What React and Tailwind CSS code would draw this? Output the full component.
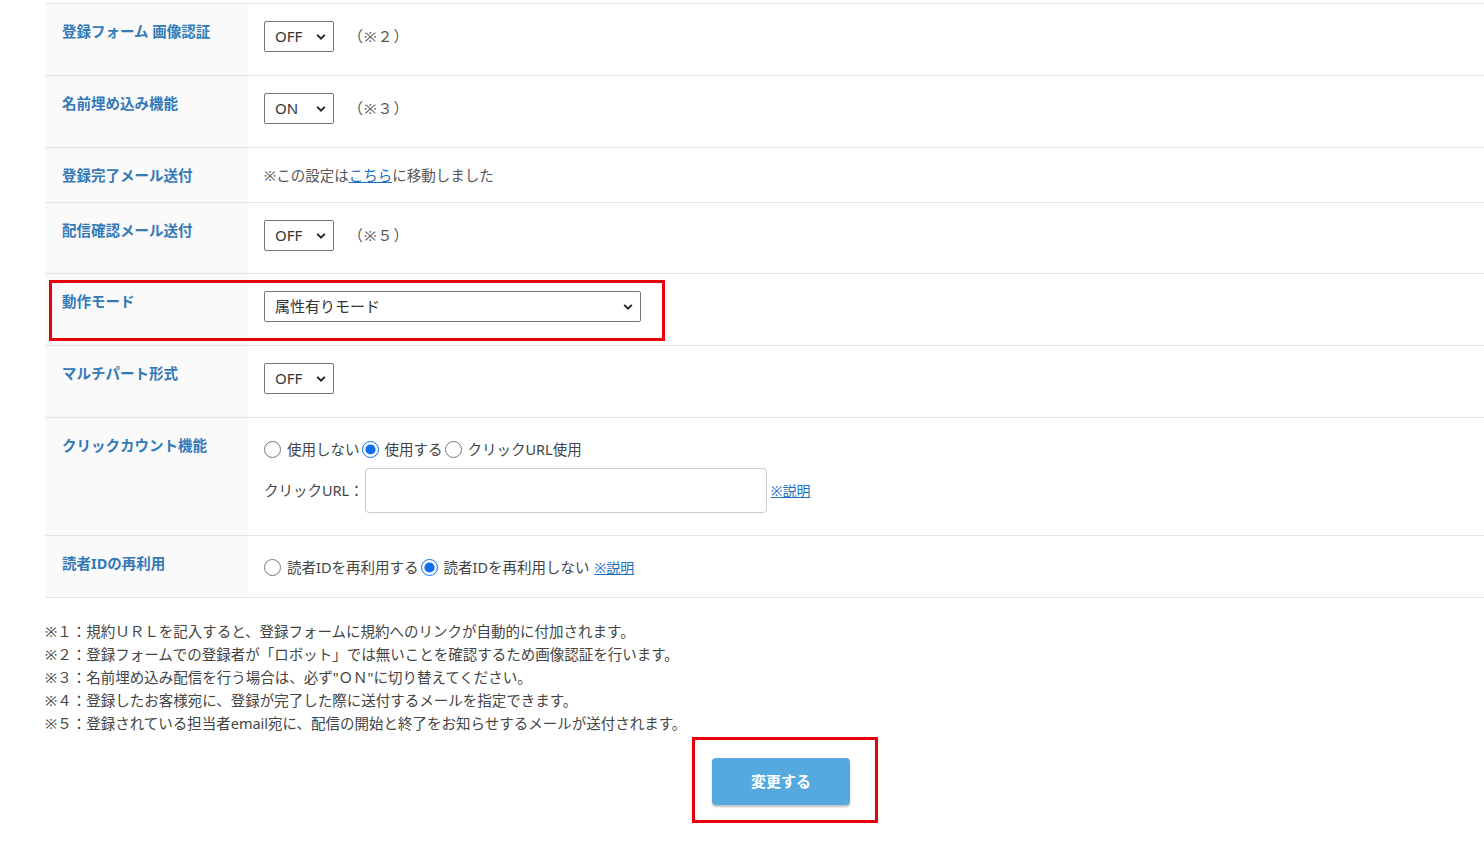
import { useState } from 'react'

const font = { fontFamily: '"Noto Sans", "Noto Sans CJK JP", sans-serif' }

function Chevron() {
  return (
    <svg
      className="pointer-events-none absolute right-[8px] top-1/2 -translate-y-1/2"
      width="10"
      height="7"
      viewBox="0 0 10 7"
      fill="none"
    >
      <path d="M1.2 1.4 5 5.2 8.8 1.4" stroke="#222" strokeWidth="1.9" />
    </svg>
  )
}

function Select({ value, options, wide }) {
  return (
    <div className={wide ? 'relative w-[377px]' : 'relative w-[70px]'}>
      <select
        defaultValue={value}
        className="h-[31px] w-full appearance-none rounded-[2px] border border-[#767676] bg-white pl-[10px] pr-6 text-[15px] text-[#333] outline-none"
        style={font}
      >
        {options.map((o) => (
          <option key={o}>{o}</option>
        ))}
      </select>
      <Chevron />
    </div>
  )
}

function Row({ label, height, children, first }) {
  return (
    <div className={`flex border-b border-[#e6e6e6] ${height} ${first ? 'border-t' : ''}`}>
      <div className="w-[203px] shrink-0 bg-[#fafafa] px-[17px] pt-[17px]">
        <div className="text-[14.5px] font-bold leading-[20px] text-[#3479b8]">{label}</div>
      </div>
      <div className="flex-1 px-4 pt-[17px] text-[14.5px] text-[#555]">{children}</div>
    </div>
  )
}

function Radio({ name, checked, label }) {
  return (
    <label className="flex items-center">
      <input
        type="radio"
        name={name}
        defaultChecked={checked}
        className="m-0 mr-[6px] h-[17px] w-[17px] accent-[#0b6ff0]"
      />
      <span className="mr-[2px] text-[14.5px] text-[#444]">{label}</span>
    </label>
  )
}

export default function App() {
  const [url, setUrl] = useState('')
  const notes = [
    '※１：規約ＵＲＬを記入すると、登録フォームに規約へのリンクが自動的に付加されます。',
    '※２：登録フォームでの登録者が「ロボット」では無いことを確認するため画像認証を行います。',
    '※３：名前埋め込み配信を行う場合は、必ず"ＯＮ"に切り替えてください。',
    '※４：登録したお客様宛に、登録が完了した際に送付するメールを指定できます。',
    '※５：登録されている担当者email宛に、配信の開始と終了をお知らせするメールが送付されます。',
  ]

  return (
    <div className="min-h-[842px] w-full bg-white pl-[45px] pt-[3px]" style={font}>
      <Row label="登録フォーム 画像認証" height="h-[73px]" first>
        <div className="flex items-center gap-[14px]">
          <Select value="OFF" options={['OFF', 'ON']} />
          <span className="text-[15px] tracking-[1px]">（※２）</span>
        </div>
      </Row>
      <Row label="名前埋め込み機能" height="h-[72px]">
        <div className="flex items-center gap-[14px]">
          <Select value="ON" options={['OFF', 'ON']} />
          <span className="text-[15px] tracking-[1px]">（※３）</span>
        </div>
      </Row>
      <Row label="登録完了メール送付" height="h-[55px]">
        <div className="leading-[20px]">
          ※この設定は
          <a href="#" className="text-[#1a6fc0] underline">
            こちら
          </a>
          に移動しました
        </div>
      </Row>
      <Row label="配信確認メール送付" height="h-[71px]">
        <div className="flex items-center gap-[14px]">
          <Select value="OFF" options={['OFF', 'ON']} />
          <span className="text-[15px] tracking-[1px]">（※５）</span>
        </div>
      </Row>
      <div className="relative">
        <Row label="動作モード" height="h-[72px]">
          <Select wide value="属性有りモード" options={['属性有りモード', '通常モード']} />
        </Row>
        <div className="pointer-events-none absolute left-[4px] top-[6px] h-[61px] w-[616px] border-[3px] border-[#e8000b]" />
      </div>
      <Row label="マルチパート形式" height="h-[72px]">
        <Select value="OFF" options={['OFF', 'ON']} />
      </Row>
      <Row label="クリックカウント機能" height="h-[118px]">
        <div className="flex h-[29px] items-center">
          <Radio name="click" label="使用しない" />
          <Radio name="click" label="使用する" checked />
          <Radio name="click" label="クリックURL使用" />
        </div>
        <div className="mt-[4px] flex items-center">
          <span className="mr-[1px] text-[14.5px] text-[#444]">クリックURL：</span>
          <input
            value={url}
            onChange={(e) => setUrl(e.target.value)}
            className="h-[45px] w-[402px] rounded-[4px] border border-[#cccccc] px-2 outline-none"
          />
          <a href="#" className="ml-[4px] text-[14px] text-[#1a6fc0] underline">
            ※説明
          </a>
        </div>
      </Row>
      <Row label="読者IDの再利用" height="h-[62px]">
        <div className="flex h-[29px] items-center">
          <Radio name="reuse" label="読者IDを再利用する" />
          <Radio name="reuse" label="読者IDを再利用しない" checked />
          <a href="#" className="ml-[3px] text-[14px] text-[#1a6fc0] underline">
            ※説明
          </a>
        </div>
      </Row>

      <div className="mt-[22px] text-[14.5px] leading-[23px] text-[#444]">
        {notes.map((n) => (
          <div key={n}>{n}</div>
        ))}
      </div>

      <div className="mt-[2px] pl-[647px]">
        <div className="inline-block border-[3px] border-[#e8000b] pb-[15px] pl-[17px] pr-[25px] pt-[18px]">
          <button className="h-[47px] w-[138px] rounded-[4px] bg-[#56a9df] text-[15px] font-bold text-white shadow-[0_2px_2px_rgba(0,0,0,0.25)]">
            変更する
          </button>
        </div>
      </div>
    </div>
  )
}
